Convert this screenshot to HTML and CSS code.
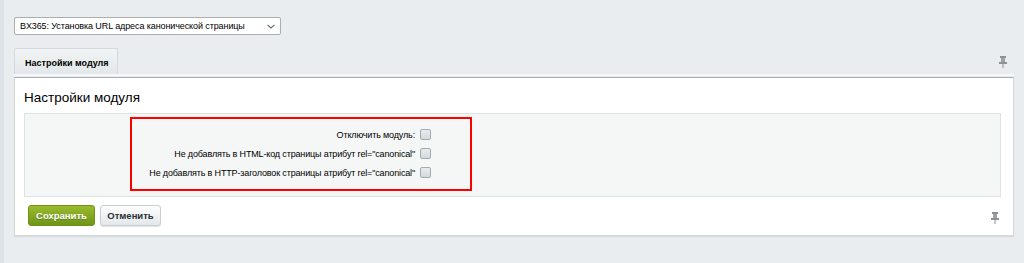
FILE: index.html
```html
<!DOCTYPE html>
<html lang="ru">
<head>
<meta charset="utf-8">
<link rel="stylesheet" href="styles.css">
</head>
<body>
<div class="page">
  <div class="select">
    <span class="select-text">BX365: Установка URL адреса канонической страницы</span>
    <svg class="chev" width="8" height="5" viewBox="0 0 8 5"><path d="M0.5 0.8 L4 4 L7.5 0.8" fill="none" stroke="#666" stroke-width="1.1"/></svg>
  </div>
  <div class="tabs">
    <div class="tab">Настройки модуля</div>
    <svg class="pin" width="8" height="12" viewBox="0 0 8 12"><rect x="1" y="0" width="6" height="2" fill="#8a9297"/><rect x="2" y="2" width="4" height="4" fill="#9aa2a7"/><rect x="0" y="6" width="8" height="2" fill="#8a9297"/><rect x="3.5" y="8" width="1" height="4" fill="#8a9297"/></svg>
  </div>
  <div class="panel">
    <h2 class="title">Настройки модуля</h2>
    <div class="table">
      <div class="highlight"></div>
      <div class="row"><div class="label">Отключить модуль:</div><div class="field"><span class="cb"></span></div></div>
      <div class="row"><div class="label">Не добавлять в HTML-код страницы атрибут rel="canonical"</div><div class="field"><span class="cb"></span></div></div>
      <div class="row"><div class="label">Не добавлять в HTTP-заголовок страницы атрибут rel="canonical"</div><div class="field"><span class="cb"></span></div></div>
    </div>
    <div class="buttons">
      <button class="btn btn-save">Сохранить</button>
      <button class="btn btn-cancel">Отменить</button>
      <svg class="pin pin-bottom" width="8" height="12" viewBox="0 0 8 12"><rect x="1" y="0" width="6" height="2" fill="#8a9297"/><rect x="2" y="2" width="4" height="4" fill="#9aa2a7"/><rect x="0" y="6" width="8" height="2" fill="#8a9297"/><rect x="3.5" y="8" width="1" height="4" fill="#8a9297"/></svg>
    </div>
  </div>
</div>
</body>
</html>
```
FILE: styles.css
```css
html, body {
  margin: 0;
  padding: 0;
  background: #e9edef;
  font-family: "Liberation Sans", Arial, sans-serif;
}
body {
  border-left: 4px solid #dbe2e8;
  min-height: 263px;
  box-sizing: border-box;
}
.page {
  padding: 17px 10px 0 10px;
}
.select {
  width: 267px;
  height: 18px;
  box-sizing: border-box;
  background: #fff;
  border: 1px solid #a9aeb1;
  border-radius: 2px;
  display: flex;
  align-items: center;
  justify-content: space-between;
  padding: 0 5px 0 5px;
  font-size: 9px;
  letter-spacing: -0.1px;
  color: #000;
  margin-bottom: 13px;
  white-space: nowrap;
}
.select-text { line-height: 16px; }
.chev { margin-top: 1px; }
.tabs {
  display: flex;
  align-items: flex-end;
  justify-content: space-between;
  height: 26px;
  border-bottom: 2px solid #f4f6f7;
}
.tab {
  height: 26px;
  box-sizing: border-box;
  padding: 9px 10px 0 10px;
  border: 1px solid #d3d9dc;
  border-bottom: none;
  border-radius: 2px 2px 0 0;
  background: linear-gradient(#f2f4f5, #e2e7e9);
  font-size: 9px;
  font-weight: bold;
  color: #000;
  white-space: nowrap;
  width: 104px;
}
.pin {
  align-self: center;
  margin-right: 7px;
  margin-top: 2px;
}
.panel {
  margin-top: 1px;
  background: #fff;
  border: 1px solid #d3dadd;
  border-top: 1px solid #a5adb0;
  box-shadow: 0 1px 1px rgba(0,0,0,0.08);
  padding: 0 12px 10px 9px;
  height: 159px;
  box-sizing: border-box;
}
.title {
  margin: 0;
  padding: 12px 0 8px 0;
  font-size: 13.5px;
  font-weight: normal;
  color: #000;
  line-height: 15px;
}
.table {
  position: relative;
  background: #f5f7f7;
  border: 1px solid #dde3e4;
  padding: 11px 0 14px 0;
  height: 84px;
  box-sizing: border-box;
}
.highlight {
  position: absolute;
  left: 105px;
  top: 3px;
  width: 342px;
  height: 74px;
  box-sizing: border-box;
  border: 2px solid #ff0000;
}
.row {
  display: flex;
  align-items: center;
  height: 19px;
}
.label {
  width: 40%;
  text-align: right;
  font-size: 9px;
  letter-spacing: -0.15px;
  color: #000;
  padding-right: 0;
  box-sizing: border-box;
  white-space: nowrap;
}
.field { display: flex; align-items: center; }
.cb {
  display: inline-block;
  width: 11px;
  height: 11px;
  box-sizing: border-box;
  border: 1px solid #a2abaf;
  border-radius: 2px;
  background: linear-gradient(#e9ecee, #d4d9dc);
  margin-left: 5px;
}
.buttons {
  display: flex;
  align-items: center;
  margin-top: 8px;
  padding-left: 4px;
}
.btn {
  height: 21px;
  border-radius: 3px;
  font-family: "Liberation Sans", Arial, sans-serif;
  font-size: 9.5px;
  font-weight: bold;
  padding: 0;
  margin-right: 5px;
  cursor: pointer;
  white-space: nowrap;
}
.btn-save {
  width: 67px;
  color: #fff;
  border: 1px solid #6f9116;
  background: linear-gradient(#99bb2d, #6f9519);
  text-shadow: 0 1px 0 rgba(0,0,0,0.25);
}
.btn-cancel {
  width: 61px;
  color: #2c3135;
  border: 1px solid #c8cfd2;
  background: linear-gradient(#fdfdfd, #e3e8ea);
  box-shadow: 0 1px 1px rgba(0,0,0,0.12);
}
.pin-bottom {
  margin-left: auto;
  margin-right: 2px;
  margin-top: 5px;
}
```
